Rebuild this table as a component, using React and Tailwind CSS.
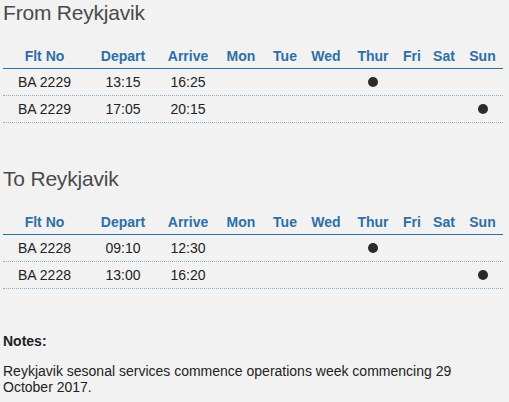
const days = ['Mon', 'Tue', 'Wed', 'Thur', 'Fri', 'Sat', 'Sun'];

const cols = [
    'w-[83px]', 'w-[74px]', 'w-[56px]', 'w-[50px]', 'w-[38px]',
    'w-[44px]', 'w-[50px]', 'w-[28px]', 'w-[36px]', 'w-[41px]',
];

const schedules = [
    {
        title: 'From Reykjavik',
        flights: [
            { no: 'BA 2229', dep: '13:15', arr: '16:25', day: 'Thur' },
            { no: 'BA 2229', dep: '17:05', arr: '20:15', day: 'Sun' },
        ],
    },
    {
        title: 'To Reykjavik',
        flights: [
            { no: 'BA 2228', dep: '09:10', arr: '12:30', day: 'Thur' },
            { no: 'BA 2228', dep: '13:00', arr: '16:20', day: 'Sun' },
        ],
    },
];

const Schedule = ({ title, flights }) => (
    <section className="mb-[44px]">
        <h2 className="text-[21px] leading-[24px] text-[#4a4a4a] font-normal tracking-[-0.2px]">{title}</h2>

        <div className="mt-[20px] w-[500px]">
            {/* Header */}
            <div className="flex h-[24px] border-b border-[#2d6fa6] text-[14px] font-bold text-[#2d6fa6]">
                {['Flt No', 'Depart', 'Arrive', ...days].map((h, i) => (
                    <div key={h} className={`${cols[i]} flex items-center justify-center pb-[1px]`}>{h}</div>
                ))}
            </div>

            {/* Rows */}
            {flights.map((f, r) => (
                <div key={r} className="flex h-[27px] border-b border-dotted border-[#8aafcd] text-[14px] text-[#222]">
                    <div className={`${cols[0]} flex items-center justify-center`}>{f.no}</div>
                    <div className={`${cols[1]} flex items-center justify-center`}>{f.dep}</div>
                    <div className={`${cols[2]} flex items-center justify-center`}>{f.arr}</div>
                    {days.map((d, i) => (
                        <div key={d} className={`${cols[i + 3]} flex items-center justify-center`}>
                            {f.day === d && <span className="block w-[10px] h-[10px] rounded-full bg-[#2b2b2b]" />}
                        </div>
                    ))}
                </div>
            ))}
        </div>
    </section>
);

const App = () => {
    return (
        <div className="min-h-screen bg-[#f2f2f2] pl-[3px] pt-[1px] font-['Liberation_Sans',Arial,sans-serif]">
            {schedules.map(s => (
                <Schedule key={s.title} title={s.title} flights={s.flights} />
            ))}

            {/* Notes */}
            <div className="w-[500px] text-[14px] text-[#222]">
                <p className="font-bold leading-[16px]">Notes:</p>
                <p className="mt-[14px] leading-[16px]">
                    Reykjavik sesonal services commence operations week commencing 29 October 2017.
                </p>
            </div>
        </div>
    );
};

export default App;
